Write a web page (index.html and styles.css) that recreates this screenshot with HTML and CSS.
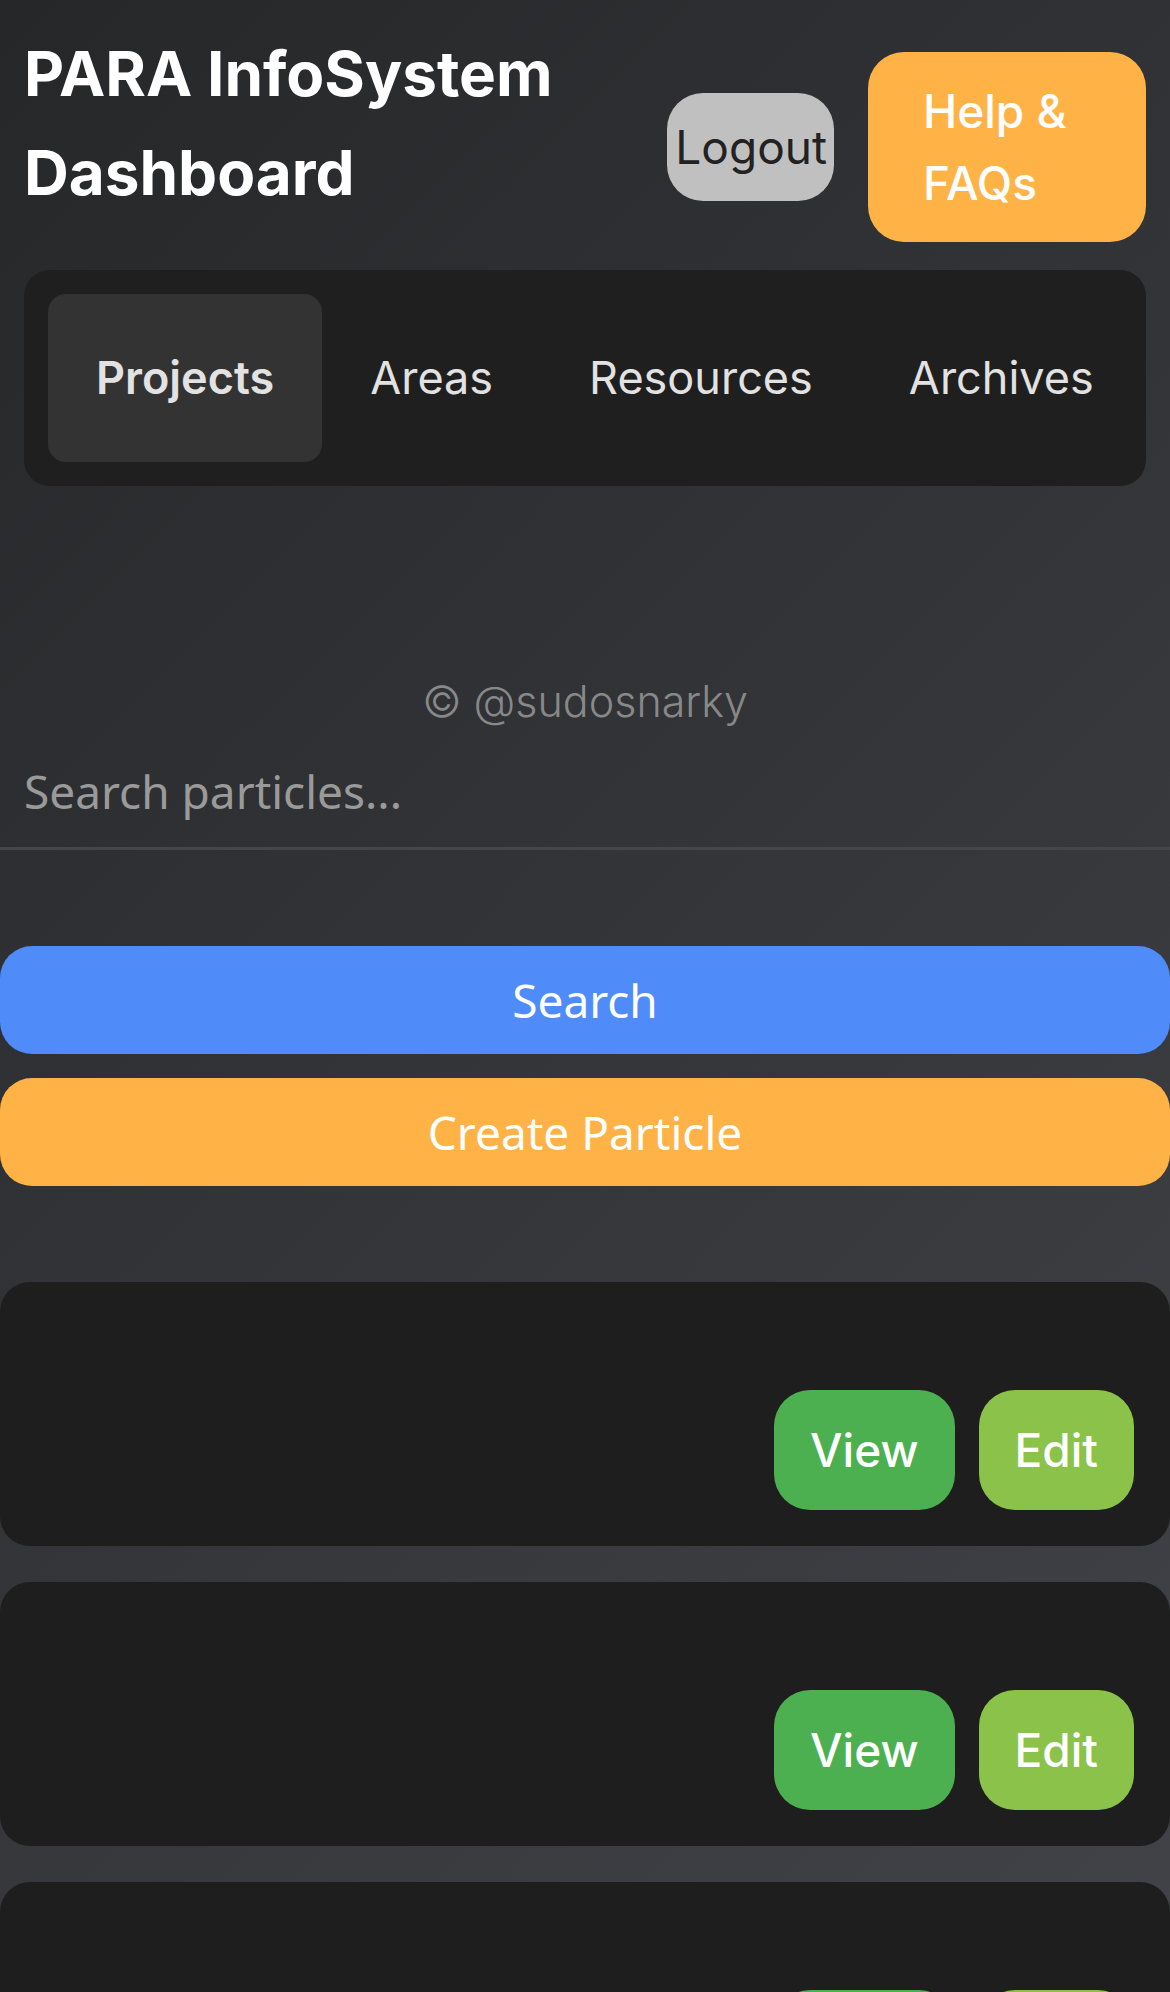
FILE: index.html
```html
<!DOCTYPE html>
<html lang="en">
<head>
<meta charset="utf-8">
<title>PARA InfoSystem Dashboard</title>
<link rel="stylesheet" href="styles.css">
</head>
<body>
<div class="app">
  <header class="topbar">
    <h1 class="title">PARA InfoSystem Dashboard</h1>
    <div class="actions">
      <button class="btn-logout">Logout</button>
      <button class="btn-help">Help &amp; FAQs</button>
    </div>
  </header>

  <nav class="tabs">
    <button class="tab active">Projects</button>
    <button class="tab">Areas</button>
    <button class="tab">Resources</button>
    <button class="tab">Archives</button>
  </nav>

  <footer class="credit">© @sudosnarky</footer>

  <div class="search">
    <input class="search-input" type="text" placeholder="Search particles...">
  </div>

  <button class="btn-block btn-search">Search</button>
  <button class="btn-block btn-create">Create Particle</button>

  <section class="list">
    <article class="card">
      <h3 class="card-title"></h3>
      <div class="card-actions">
        <button class="btn-view">View</button>
        <button class="btn-edit">Edit</button>
      </div>
    </article>
    <article class="card">
      <h3 class="card-title"></h3>
      <div class="card-actions">
        <button class="btn-view">View</button>
        <button class="btn-edit">Edit</button>
      </div>
    </article>
    <article class="card">
      <h3 class="card-title"></h3>
      <div class="card-actions">
        <button class="btn-view">View</button>
        <button class="btn-edit">Edit</button>
      </div>
    </article>
  </section>
</div>
</body>
</html>
```

FILE: styles.css
```css
html {
  background: #2f3033;
}

body {
  margin: 0;
  min-height: 100vh;
  background: linear-gradient(135deg, #262729 0%, #44454a 100%);
  font-family: Inter, "Noto Sans", sans-serif;
  color: #fff;
}

button {
  border: none;
  cursor: pointer;
}

.app {
  padding-bottom: 60px;
}

/* Header */
.topbar {
  display: flex;
  align-items: flex-start;
  justify-content: space-between;
  padding: 24px 24px 0;
}

.title {
  flex: 1 1 auto;
  min-width: 0;
  margin: 0;
  font-family: Inter, sans-serif;
  font-weight: 700;
  font-size: 62px;
  line-height: 99px;
  color: #fff;
}

.actions {
  flex: 0 0 auto;
  display: flex;
  align-items: center;
  gap: 34px;
  margin-top: 28px;
}

.btn-logout {
  background: #c0c0c0;
  color: #222;
  font-family: Inter, sans-serif;
  font-weight: 400;
  font-size: 46px;
  line-height: 72px;
  padding: 18px 7px 18px 8px;
  border-radius: 36px;
}

.btn-help {
  width: 278px;
  box-sizing: border-box;
  background: #ffb347;
  color: #fff;
  font-family: Inter, sans-serif;
  font-weight: 500;
  font-size: 46px;
  line-height: 72px;
  padding: 23px 54px 23px 55px;
  text-align: left;
  border-radius: 36px;
}

/* Tabs */
.tabs {
  display: flex;
  justify-content: space-between;
  margin: 28px 24px 0;
  padding: 24px;
  background: #1f1f1f;
  border-radius: 26px;
}

.tab {
  background: transparent;
  color: #e2e2e2;
  font-family: Inter, sans-serif;
  font-weight: 400;
  font-size: 45px;
  line-height: 72px;
  padding: 48px;
  border-radius: 18px;
}

.tab.active {
  background: #333333;
  font-weight: 600;
}

/* Credit */
.credit {
  margin-top: 190px;
  text-align: center;
  font-family: Inter, sans-serif;
  font-weight: 300;
  font-size: 43px;
  line-height: 51px;
  color: #888888;
}

/* Search */
.search {
  margin-top: 8px;
}

.search-input {
  display: block;
  width: 100%;
  box-sizing: border-box;
  padding: 25px 24px 25px;
  background: transparent;
  border: none;
  border-bottom: 3px solid #45464a;
  font-family: "Noto Sans", "Open Sans", sans-serif;
  font-size: 46px;
  color: #fff;
  outline: none;
}

.search-input::placeholder {
  color: #9a9a9a;
}

.btn-block {
  display: block;
  width: 100%;
  font-family: "Noto Sans", "Open Sans", sans-serif;
  font-size: 46px;
  line-height: 72px;
  padding: 18px;
  color: #fff;
  border-radius: 32px;
}

.btn-search {
  margin-top: 96px;
  background: #4f8bf9;
}

.btn-create {
  margin-top: 24px;
  background: #ffb347;
}

/* Cards */
.list {
  display: flex;
  flex-direction: column;
  gap: 36px;
  margin-top: 96px;
}

.card {
  background: #1e1e1e;
  border-radius: 30px;
  padding: 36px;
}

.card-title {
  margin: 0;
  min-height: 72px;
}

.card-actions {
  display: flex;
  justify-content: flex-end;
  gap: 24px;
}

.btn-view,
.btn-edit {
  color: #fff;
  font-family: Inter, sans-serif;
  font-weight: 500;
  font-size: 46px;
  line-height: 72px;
  padding: 24px 36px;
  border-radius: 36px;
}

.btn-view {
  background: #4caf50;
}

.btn-edit {
  background: #8bc34a;
}
```
